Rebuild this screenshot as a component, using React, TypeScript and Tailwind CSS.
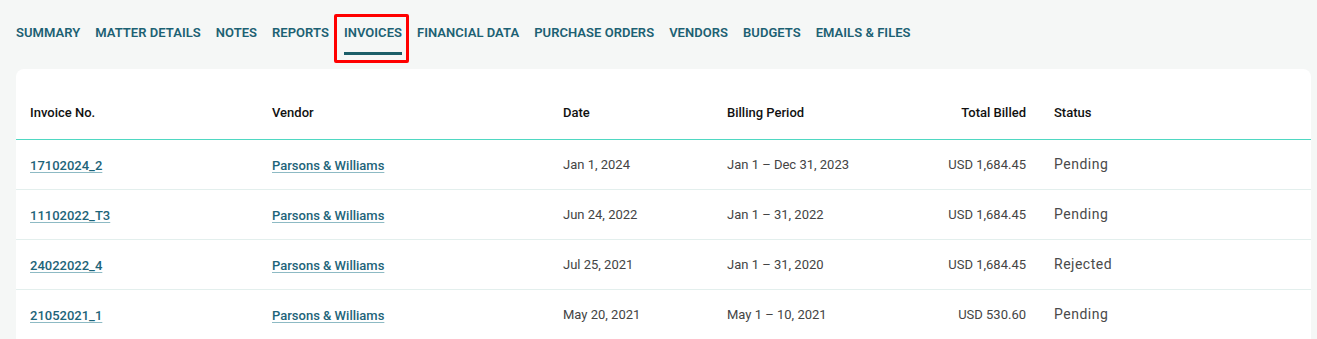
import React from 'react';

const tabs = [
  'SUMMARY',
  'MATTER DETAILS',
  'NOTES',
  'REPORTS',
  'INVOICES',
  'FINANCIAL DATA',
  'PURCHASE ORDERS',
  'VENDORS',
  'BUDGETS',
  'EMAILS & FILES',
];

interface Invoice {
  number: string;
  vendor: string;
  date: string;
  period: string;
  total: string;
  status: string;
}

const invoices: Invoice[] = [
  { number: '17102024_2', vendor: 'Parsons & Williams', date: 'Jan 1, 2024', period: 'Jan 1 – Dec 31, 2023', total: 'USD 1,684.45', status: 'Pending' },
  { number: '11102022_T3', vendor: 'Parsons & Williams', date: 'Jun 24, 2022', period: 'Jan 1 – 31, 2022', total: 'USD 1,684.45', status: 'Pending' },
  { number: '24022022_4', vendor: 'Parsons & Williams', date: 'Jul 25, 2021', period: 'Jan 1 – 31, 2020', total: 'USD 1,684.45', status: 'Rejected' },
  { number: '21052021_1', vendor: 'Parsons & Williams', date: 'May 20, 2021', period: 'May 1 – 10, 2021', total: 'USD 530.60', status: 'Pending' },
];

const cols = 'grid grid-cols-[242px_291px_164px_180px_119px_1fr] pl-[14px]';

const App: React.FC = () => {
  return (
    <div className="min-h-[339px] bg-[#f5f7f6] font-['Roboto',sans-serif] pl-4 pr-[6px] overflow-hidden">
      <nav className="flex items-start gap-[15px] pt-[24px] h-[69px]">
        {tabs.map((t) => {
          const active = t === 'INVOICES';
          return (
            <div key={t} className="relative flex flex-col items-stretch">
              <span className="text-[13px] font-semibold leading-[18px] tracking-[0.04px] text-[#1c6173] whitespace-nowrap">
                {t}
              </span>
              {active && (
                <>
                  <span className="mt-[10px] h-[3px] bg-[#1b5e68]" />
                  <span className="absolute -left-[10px] -right-[7px] -top-[10px] h-[49px] border-[3px] border-[#ff0000] rounded-[2px]" />
                </>
              )}
            </div>
          );
        })}
      </nav>

      <div className="bg-white rounded-t-[8px]">
        <div className={`${cols} pt-[35px] h-[70px] text-[13px] font-medium text-[#111] leading-[17px]`}>
          <div>Invoice No.</div>
          <div>Vendor</div>
          <div>Date</div>
          <div>Billing Period</div>
          <div className="text-right">Total Billed</div>
          <div className="pl-[28px]">Status</div>
        </div>
        <div className="h-px bg-[#4fd8c2]" />
        {invoices.map((inv, i) => (
          <React.Fragment key={inv.number}>
            <div className={`${cols} items-center h-[49px]`}>
              <div>
                <a className="text-[13px] font-medium text-[#1d6479] underline decoration-[#8dbac4] underline-offset-[2px]">
                  {inv.number}
                </a>
              </div>
              <div>
                <a className="text-[13px] font-medium text-[#1d6479] underline decoration-[#8dbac4] underline-offset-[2px]">
                  {inv.vendor}
                </a>
              </div>
              <div className="text-[13px] text-[#444]">{inv.date}</div>
              <div className="text-[13px] text-[#444]">{inv.period}</div>
              <div className="text-[13px] text-[#444] text-right">{inv.total}</div>
              <div className="pl-[28px] text-[14px] tracking-[0.5px] text-[#4a4a4a]">{inv.status}</div>
            </div>
            {i < invoices.length - 1 && <div className="h-px bg-[#e3efed]" />}
          </React.Fragment>
        ))}
      </div>
    </div>
  );
};

export default App;
